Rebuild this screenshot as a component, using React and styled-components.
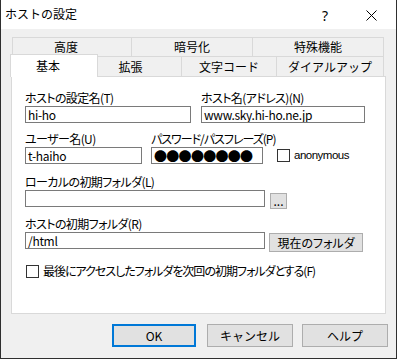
import React from "react";
import styled, { createGlobalStyle } from "styled-components";

const Global = createGlobalStyle`
  html, body {
    margin: 0;
    padding: 0;
    background: #ffffff;
  }
  body {
    font-family: "Noto Sans CJK JP", "Noto Sans", sans-serif;
    font-size: 12px;
    color: #000;
  }
`;

const App = () => {
  return (
    <>
      <Global />
      <Window>
        <TitleBar>
          <Title>ホストの設定</Title>
          <Help>?</Help>
          <Close>
            <svg width="11" height="11" viewBox="0 0 11 11">
              <path d="M0.5 0.5 L10.5 10.5 M10.5 0.5 L0.5 10.5" stroke="#000" strokeWidth="1" />
            </svg>
          </Close>
        </TitleBar>
        <Body>
          <TabControl>
            <TabRow>
              <Tab w={120} pad={12}>高度</Tab>
              <Tab w={121}>暗号化</Tab>
              <Tab w={131}>特殊機能</Tab>
            </TabRow>
            <TabRow>
              <Tab w={84} pad={12} active>基本</Tab>
              <Tab w={86} pad={16}>拡張</Tab>
              <Tab w={95}>文字コード</Tab>
              <Tab w={107} pad={-6}>ダイアルアップ</Tab>
            </TabRow>
            <Panel>
              <Row>
                <Field w={166}>
                  <Label>ホストの設定名(T)</Label>
                  <Input>hi-ho</Input>
                </Field>
                <Field w={164}>
                  <Label>ホスト名(アドレス)(N)</Label>
                  <Input>www.sky.hi-ho.ne.jp</Input>
                </Field>
              </Row>
              <Row mt={9} gap={9}>
                <Field w={117}>
                  <Label>ユーザー名(U)</Label>
                  <Input>t-haiho</Input>
                </Field>
                <Field w={112}>
                  <Label tight>パスワード/パスフレーズ(P)</Label>
                  <Input dots>●●●●●●●●</Input>
                </Field>
                <Check ml={5}>
                  <Box />
                  <Small>anonymous</Small>
                </Check>
              </Row>
              <Row mt={11}>
                <Field w={240}>
                  <Label>ローカルの初期フォルダ(L)</Label>
                  <Input />
                </Field>
                <Button w={17} h={16} mb={-2} ml={-5}>...</Button>
              </Row>
              <Row mt={10}>
                <Field w={240}>
                  <Label>ホストの初期フォルダ(R)</Label>
                  <Input>/html</Input>
                </Field>
                <Button w={94} h={19} mb={-3} ml={-6}>現在のフォルダ</Button>
              </Row>
              <Check top={15} tight>
                <Box />
                <span>最後にアクセスしたフォルダを次回の初期フォルダとする(F)</span>
              </Check>
            </Panel>
          </TabControl>
          <ButtonBar>
            <DialogButton w={84} primary>OK</DialogButton>
            <DialogButton w={86} ml={11}>キャンセル</DialogButton>
            <DialogButton w={86} ml={9}>ヘルプ</DialogButton>
          </ButtonBar>
        </Body>
      </Window>
    </>
  );
};

export default App;

const Window = styled.div`
  width: 397px;
  height: 359px;
  box-sizing: border-box;
  border: 1px solid #2f2f2f;
  border-top: none;
  display: flex;
  flex-direction: column;
  overflow: hidden;
`;

const TitleBar = styled.div`
  height: 29px;
  flex: none;
  background: #fff;
  display: flex;
  align-items: center;
  padding-left: 4px;
`;

const Title = styled.div`
  flex: 1;
  font-size: 12px;
  line-height: 14px;
  margin-top: -1px;
`;

const Help = styled.div`
  font-family: "Noto Sans", sans-serif;
  font-size: 14px;
  line-height: 14px;
  width: 10px;
  margin-right: 34px;
  margin-top: 2px;
`;

const Close = styled.div`
  width: 11px;
  height: 11px;
  margin-right: 19px;
  margin-top: 2px;
  display: flex;
`;

const Body = styled.div`
  flex: 1;
  background: #f0f0f0;
  padding: 8px 0 0 10px;
`;

const TabControl = styled.div`
  width: 375px;
  display: flex;
  flex-direction: column;
`;

const TabRow = styled.div`
  display: flex;
  height: ${(p) => (p.children.length === 3 ? 19 : 20)}px;
  padding-left: 1px;
  position: relative;
`;

const Tab = styled.div`
  width: ${(p) => p.w}px;
  box-sizing: border-box;
  flex: none;
  display: flex;
  align-items: center;
  justify-content: center;
  padding-right: ${(p) => p.pad || 0}px;
  border: 1px solid #d9d9d9;
  border-bottom: none;
  border-left-width: 0;
  &:first-child {
    border-left-width: 1px;
  }
  background: ${(p) => (p.active ? "#fff" : "#f0f0f0")};
  font-size: 12px;
  line-height: 14px;
  ${(p) =>
    p.active &&
    `
    position: relative;
    z-index: 2;
    width: ${p.w + 4}px;
    margin: -2px -2px -1px -2px;
    height: 23px;
    border-left-width: 1px;
  `}
`;

const Panel = styled.div`
  height: 238px;
  box-sizing: border-box;
  background: #fff;
  border: 1px solid #d9d9d9;
  padding: 14px 0 0 13px;
  display: flex;
  flex-direction: column;
  position: relative;
  z-index: 1;
  font-feature-settings: "palt";
`;

const Row = styled.div`
  display: flex;
  align-items: flex-end;
  gap: ${(p) => (p.gap === undefined ? 10 : p.gap)}px;
  margin-top: ${(p) => p.mt || 0}px;
`;

const Field = styled.div`
  width: ${(p) => p.w}px;
  display: flex;
  flex-direction: column;
`;

const Label = styled.div`
  font-size: 12px;
  line-height: 14px;
  height: 14px;
  margin-bottom: 1px;
  letter-spacing: ${(p) => (p.tight ? -1 : -0.6)}px;
  white-space: nowrap;
`;

const Input = styled.div`
  height: 17px;
  box-sizing: border-box;
  border: 1px solid #7a7a7a;
  background: #fff;
  padding-left: 2px;
  font-size: ${(p) => (p.dots ? 13 : 12)}px;
  line-height: 15px;
  letter-spacing: ${(p) => (p.dots ? "-0.7px" : "-0.3px")};
  font-feature-settings: normal;
  white-space: nowrap;
  overflow: hidden;
`;

const Check = styled.label`
  display: flex;
  align-items: center;
  gap: 4px;
  margin-top: ${(p) => p.top || 0}px;
  margin-left: ${(p) => p.ml || 1}px;
  margin-bottom: ${(p) => (p.ml ? 2 : 0)}px;
  font-size: 12px;
  line-height: 14px;
  letter-spacing: ${(p) => (p.tight ? -1 : -0.3)}px;
  white-space: nowrap;
`;

const Box = styled.span`
  width: 13px;
  height: 13px;
  box-sizing: border-box;
  border: 1px solid #333;
  background: #fff;
  flex: none;
`;

const Small = styled.span`
  font-family: "Liberation Sans", sans-serif;
  font-size: 11.5px;
  letter-spacing: -0.5px;
`;

const Button = styled.div`
  width: ${(p) => p.w}px;
  height: ${(p) => p.h}px;
  margin-bottom: ${(p) => p.mb || 0}px;
  margin-left: ${(p) => p.ml || 0}px;
  box-sizing: border-box;
  border: 1px solid #adadad;
  background: #e1e1e1;
  display: flex;
  align-items: center;
  justify-content: center;
  font-size: 12px;
  line-height: 12px;
  flex: none;
`;

const ButtonBar = styled.div`
  display: flex;
  margin-top: 10px;
  padding-left: 101px;
`;

const DialogButton = styled.div`
  width: ${(p) => p.w}px;
  height: 23px;
  margin-left: ${(p) => p.ml || 0}px;
  box-sizing: border-box;
  border: ${(p) => (p.primary ? "2px solid #0078d7" : "1px solid #adadad")};
  background: #e1e1e1;
  display: flex;
  align-items: center;
  justify-content: center;
  font-size: 12px;
  line-height: 14px;
`;
